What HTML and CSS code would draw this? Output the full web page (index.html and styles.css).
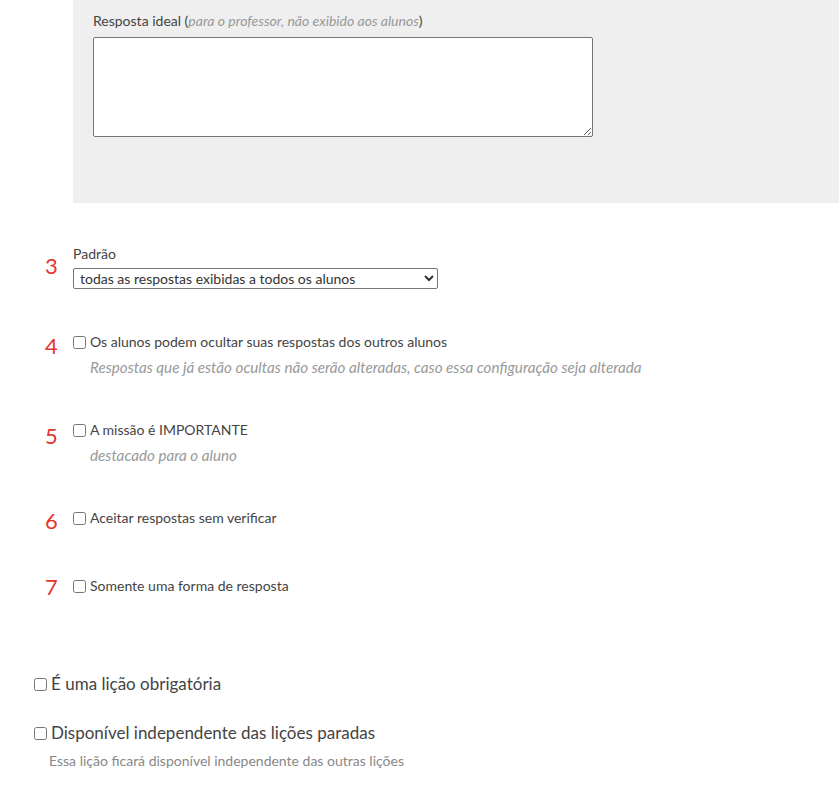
FILE: index.html
```html
<!DOCTYPE html>
<html lang="pt-BR">
<head>
  <meta charset="UTF-8" />
  <meta name="viewport" content="width=device-width, initial-scale=1" />
  <title>Configurações da missão</title>
  <link rel="stylesheet" href="styles.css">
</head>
<body>
  <div class="page">
    <div class="panel">
      <label class="field-label" for="ideal">Resposta ideal (<em>para o professor, não exibido aos alunos</em>)</label>
      <textarea id="ideal" class="ideal"></textarea>
    </div>

    <div class="option opt-3">
      <span class="num">3</span>
      <div class="body">
        <label class="field-label" for="padrao">Padrão</label>
        <select id="padrao" class="select">
          <option>todas as respostas exibidas a todos os alunos</option>
        </select>
      </div>
    </div>

    <div class="option opt-4">
      <span class="num">4</span>
      <div class="body">
        <label class="check"><input type="checkbox" /> Os alunos podem ocultar suas respostas dos outros alunos</label>
        <p class="hint">Respostas que já estão ocultas não serão alteradas, caso essa configuração seja alterada</p>
      </div>
    </div>

    <div class="option opt-5">
      <span class="num">5</span>
      <div class="body">
        <label class="check"><input type="checkbox" /> A missão é IMPORTANTE</label>
        <p class="hint">destacado para o aluno</p>
      </div>
    </div>

    <div class="option opt-6">
      <span class="num">6</span>
      <div class="body">
        <label class="check"><input type="checkbox" /> Aceitar respostas sem verificar</label>
      </div>
    </div>

    <div class="option opt-7">
      <span class="num">7</span>
      <div class="body">
        <label class="check"><input type="checkbox" /> Somente uma forma de resposta</label>
      </div>
    </div>

    <div class="lesson first">
      <label class="check big"><input type="checkbox" /> É uma lição obrigatória</label>
    </div>

    <div class="lesson">
      <label class="check big"><input type="checkbox" /> Disponível independente das lições paradas</label>
      <p class="note">Essa lição ficará disponível independente das outras lições</p>
    </div>
  </div>
</body>
</html>
```

FILE: styles.css
```css
* {
  box-sizing: border-box;
}
body {
  margin: 0;
  background: #fff;
  color: #333;
  font-family: Lato, 'Open Sans', sans-serif;
  font-size: 14px;
}
.page {
  padding-left: 34px;
}
.panel {
  margin-left: 39px;
  background: #efefef;
  height: 203px;
  padding: 12px 20px 0;
}
.field-label {
  display: block;
  font-size: 14px;
  line-height: 18px;
  color: #444;
  margin-bottom: 7px;
}
.field-label em {
  color: #999;
}
.ideal {
  display: block;
  width: 500px;
  height: 100px;
  border: 1px solid #767676;
  border-radius: 2px;
  background: #fff;
  resize: both;
}
.option {
  display: grid;
  grid-template-columns: 39px 1fr;
  align-items: start;
}
.num {
  color: #e3342f;
  font-size: 22px;
  line-height: 24px;
  text-align: center;
  padding-right: 4px;
}
.opt-3 { margin-top: 42px; }
.opt-3 .num { margin-top: 9px; }
.opt-3 .field-label { margin-bottom: 5px; }
.opt-4 { margin-top: 44px; }
.opt-4 .num { margin-top: 1px; }
.opt-5 { margin-top: 45px; }
.opt-5 .num { margin-top: 3px; }
.opt-6 { margin-top: 45px; }
.opt-6 .num { margin-top: 0; }
.opt-7 { margin-top: 44px; }
.opt-7 .num { margin-top: -2px; }
.select {
  display: block;
  width: 365px;
  height: 21px;
  font-family: Lato, 'Open Sans', sans-serif;
  font-size: 14px;
  color: #333;
  border: 1px solid #767676;
  border-radius: 2px;
  background: #fff;
  padding: 0 2px;
}
.check {
  display: flex;
  align-items: center;
  gap: 4px;
  line-height: 18px;
  color: #444;
}
.check input {
  margin: 0;
  width: 13px;
  height: 13px;
}
.hint {
  margin: 7px 0 0 17px;
  font-style: italic;
  color: #999;
  font-size: 15.2px;
  line-height: 18px;
}
.lesson {
  margin-top: 27px;
}
.lesson.first {
  margin-top: 74px;
}
.check.big {
  font-size: 17px;
  line-height: 22px;
  color: #444;
}
.note {
  margin: 8px 0 0 15px;
  font-size: 14px;
  line-height: 18px;
  color: #888;
}
```
